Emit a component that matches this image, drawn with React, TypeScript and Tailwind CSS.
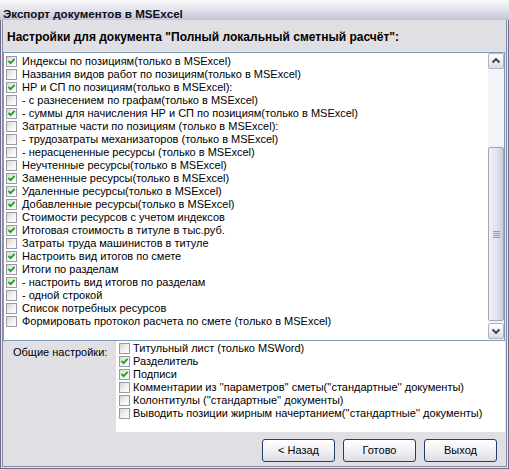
import React from "react";

const items: [string, boolean][] = [
  ["Индексы по позициям(только в MSExcel)", true],
  ["Названия видов работ по позициям(только в MSExcel)", false],
  ["НР и СП по позициям(только в MSExcel):", true],
  ["- с разнесением по графам(только в MSExcel)", false],
  ["- суммы для начисления НР и СП по позициям(только в MSExcel)", true],
  ["Затратные части по позициям (только в MSExcel):", false],
  ["- трудозатраты механизаторов (только в MSExcel)", false],
  ["- нерасцененные ресурсы (только в MSExcel)", false],
  ["Неучтенные ресурсы(только в MSExcel)", false],
  ["Замененные ресурсы(только в MSExcel)", true],
  ["Удаленные ресурсы(только в MSExcel)", true],
  ["Добавленные ресурсы(только в MSExcel)", true],
  ["Стоимости ресурсов с учетом индексов", false],
  ["Итоговая стоимость в титуле в тыс.руб.", true],
  ["Затраты труда машинистов в титуле", false],
  ["Настроить вид итогов по смете", true],
  ["Итоги по разделам", true],
  ["- настроить вид итогов по разделам", true],
  ["- одной строкой", false],
  ["Список потребных ресурсов", false],
  ["Формировать протокол расчета по смете (только в MSExcel)", false],
];

const general: [string, boolean][] = [
  ["Титульный лист (только MSWord)", false],
  ["Разделитель", true],
  ["Подписи", true],
  ["Комментарии из ''параметров'' сметы(''стандартные'' документы)", false],
  ["Колонтитулы (''стандартные'' документы)", false],
  ["Выводить позиции жирным начертанием(''стандартные'' документы)", false],
];

function Check({ checked }: { checked: boolean }) {
  return (
    <span className="relative block w-[11px] h-[11px] shrink-0 border border-[#9a9aa4] bg-gradient-to-br from-[#d6d6d2] via-[#f1f1ef] to-white">
      {checked && (
        <svg viewBox="0 0 9 9" className="absolute left-0 top-0 w-[9px] h-[9px]">
          <path d="M1.5 4 L3.6 6.2 L7.6 1.8" stroke="#21a121" strokeWidth="1.9" fill="none" />
        </svg>
      )}
    </span>
  );
}

function ScrollBtn({ up }: { up: boolean }) {
  return (
    <div className="w-[16px] h-[16px] border border-[#b2b2c4] rounded-[2px] bg-gradient-to-b from-white to-[#dcdce6] flex items-center justify-center">
      <svg viewBox="0 0 14 14" className="w-[14px] h-[14px]">
        {up ? (
          <path d="M3.5 8.5 L7 5 L10.5 8.5" stroke="#3c3c3c" strokeWidth="1.8" fill="none" />
        ) : (
          <path d="M3.5 5.5 L7 9 L10.5 5.5" stroke="#3c3c3c" strokeWidth="1.8" fill="none" />
        )}
      </svg>
    </div>
  );
}

function Btn({ label }: { label: string }) {
  return (
    <div className="w-[73px] h-[23px] border border-[#1f3f6c] rounded-[3px] bg-gradient-to-b from-white via-[#f2f2f6] to-[#dcdce4] flex items-center justify-center text-[11px] text-black">
      {label}
    </div>
  );
}

export default function App() {
  return (
    <div className="w-[509px] h-[469px] flex flex-col overflow-hidden font-['Liberation_Sans',Arial,sans-serif] text-black">
      <div className="h-[20px] shrink-0 bg-gradient-to-b from-[#fafafc] via-[#e2e2ec] to-[#c4c4d6] pl-[3px] overflow-hidden">
        <div className="pt-[7px] leading-[14px] text-[11.6px] font-bold text-[#0e0e1c]">Экспорт документов в MSExcel</div>
      </div>
      <div className="flex-1 flex flex-col border-x border-b border-[#6d6d8c]">
        <div className="flex-1 flex flex-col border-x border-b border-[#e6e6ee]">
          <div className="flex-1 flex flex-col border-x border-b border-[#8a8aa4] bg-[#e0dfe3]">
            <div className="h-[32px] shrink-0 pl-[4px] pt-[9px] leading-[16px] text-[12px] font-bold">
              Настройки для документа "Полный локальный сметный расчёт":
            </div>
            <div className="h-[289px] shrink-0 mr-[1px] border border-[#7f9db9] bg-white flex">
              <div className="flex-1 pt-[2px] pl-[2px]">
                {items.map(([t, c], i) => (
                  <div key={i} className="h-[13px] flex items-center gap-[5px] text-[11px] leading-[13px] whitespace-nowrap">
                    <Check checked={c} />
                    <span>{t}</span>
                  </div>
                ))}
              </div>
              <div className="w-[16px] bg-[#f4f4f8] flex flex-col">
                <ScrollBtn up />
                <div className="mt-[78px] h-[174px] border border-[#a4a4b8] rounded-[2px] bg-gradient-to-r from-[#f0f0f6] via-[#e4e4ee] to-[#cacada] flex flex-col items-center justify-center gap-[1px]">
                  <div className="w-[7px] h-[1px] bg-[#9898ac]" />
                  <div className="w-[7px] h-[1px] bg-[#9898ac]" />
                  <div className="w-[7px] h-[1px] bg-[#9898ac]" />
                  <div className="w-[7px] h-[1px] bg-[#9898ac]" />
                </div>
                <div className="mt-[2px]">
                  <ScrollBtn up={false} />
                </div>
              </div>
            </div>
            <div className="flex">
              <div className="w-[113px] pl-[10px] pt-[5px] text-[11px] leading-[13px]">Общие настройки:</div>
              <div className="w-[389px] h-[91px] bg-white pt-[1px] pl-[3px]">
                {general.map(([t, c], i) => (
                  <div key={i} className="h-[13px] flex items-center gap-[3px] text-[11px] leading-[13px] whitespace-nowrap">
                    <Check checked={c} />
                    <span>{t}</span>
                  </div>
                ))}
              </div>
            </div>
            <div className="flex justify-end gap-[8px] mt-[7px] pr-[9px]">
              <Btn label="< Назад" />
              <Btn label="Готово" />
              <Btn label="Выход" />
            </div>
          </div>
        </div>
      </div>
    </div>
  );
}
